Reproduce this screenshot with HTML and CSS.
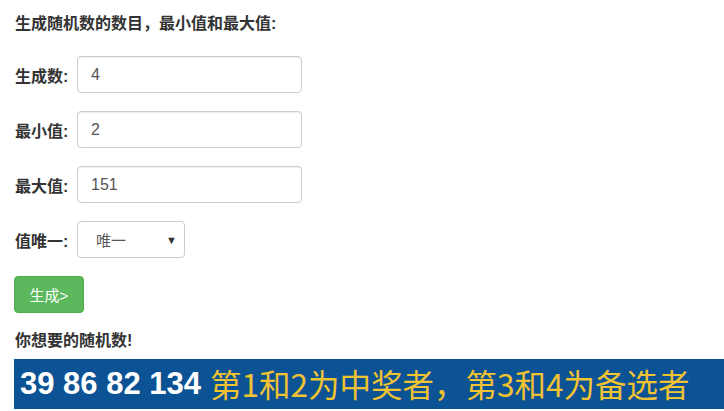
FILE: index.html
```html
<!DOCTYPE html>
<html>
<head>
<meta charset="utf-8">
<link rel="stylesheet" href="styles.css">
</head>
<body>
<div class="page">
  <p class="title">生成随机数的数目，最小值和最大值:</p>
  <div class="row"><label class="lbl">生成数:</label><input class="field" type="text" value="4"></div>
  <div class="row"><label class="lbl">最小值:</label><input class="field" type="text" value="2"></div>
  <div class="row"><label class="lbl">最大值:</label><input class="field" type="text" value="151"></div>
  <div class="row"><label class="lbl">值唯一:</label><div class="select"><span>唯一</span><span class="arrow">▼</span></div></div>
  <button class="btn">生成&gt;</button>
  <p class="title result-title">你想要的随机数!</p>
  <div class="bar"><span class="nums">39 86 82 134</span><span class="note">第1和2为中奖者，第3和4为备选者</span></div>
</div>
</body>
</html>
```
FILE: styles.css
```css
html, body { margin: 0; padding: 0; background: #fff; }
body { font-family: "Liberation Sans", Arial, "Noto Sans CJK SC", sans-serif; color: #333; }
.page { padding: 0 0 0 14px; display: flex; flex-direction: column; align-items: flex-start; }
.title { margin: 14px 0 0 1px; font-size: 16px; font-weight: bold; line-height: 20px; color: #333; }
.row { display: flex; align-items: center; margin-top: 22px; }
.row + .row { margin-top: 18px; }
.lbl { width: 62px; font-size: 16px; font-weight: bold; padding-left: 1px; color: #333; }
.field { box-sizing: border-box; width: 225px; height: 37px; border: 1px solid #ccc; border-radius: 4px; padding: 0 13px; font-family: "Liberation Sans", Arial, sans-serif; font-size: 16px; color: #555; box-shadow: inset 0 1px 1px rgba(0,0,0,.075); outline: none; }
.select { box-sizing: border-box; width: 108px; height: 37px; border: 1px solid #ccc; border-radius: 4px; display: flex; align-items: center; justify-content: space-between; padding: 0 7px 0 18px; font-size: 15px; color: #555; }
.arrow { font-size: 11px; color: #333; }
.btn { margin-top: 18px; width: 70px; height: 37px; background: #5cb85c; border: 1px solid #4cae4c; border-radius: 4px; color: #fff; font-size: 15px; font-family: "Liberation Sans", Arial, "Noto Sans CJK SC", sans-serif; padding: 0; }
.result-title { margin-top: 18px; }
.bar { margin-top: 8px; align-self: stretch; height: 50px; background: #0b5394; display: flex; align-items: center; padding-left: 6px; white-space: nowrap; overflow: hidden; }
.nums { color: #fff; font-weight: bold; font-size: 31px; font-family: "Liberation Sans", Arial, sans-serif; }
.note { color: #f1c232; font-size: 31.5px; margin-left: 9px; font-family: "Noto Sans CJK SC", sans-serif; line-height: 1; }
```
